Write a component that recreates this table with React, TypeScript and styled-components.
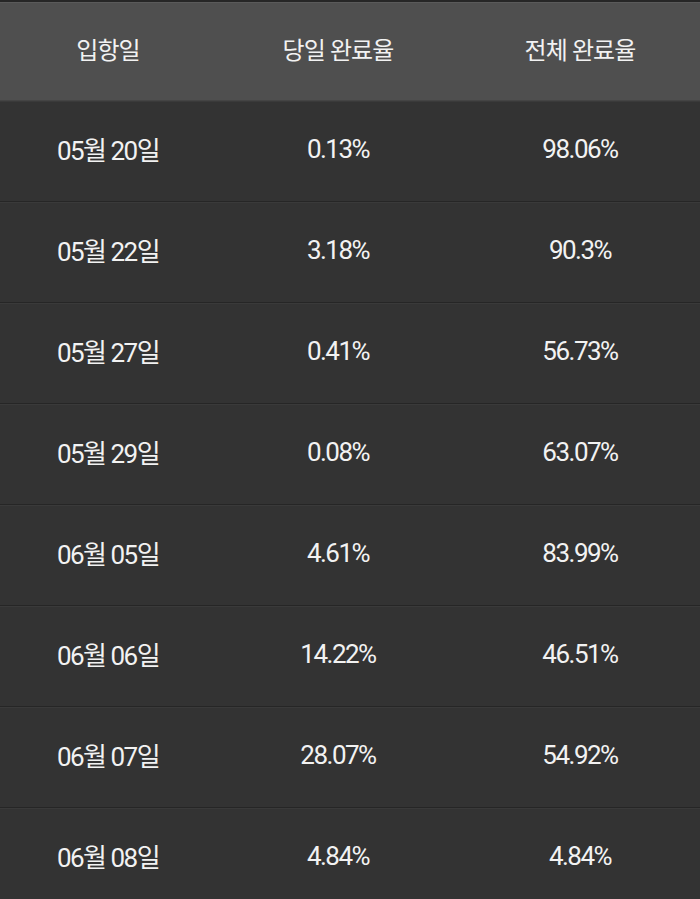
import React from "react";
import styled, { createGlobalStyle } from "styled-components";

const Global = createGlobalStyle`
  html, body { margin: 0; padding: 0; background: #333333; }
  body { font-family: Roboto, "Noto Sans CJK KR", sans-serif; }
`;

const Table = styled.div`
  width: 700px;
  border-top: 2px solid #262626;
`;

const Row = styled.div<{ $head?: boolean }>`
  display: grid;
  grid-template-columns: 216px 244px 240px;
  height: ${(p) => (p.$head ? "99px" : "101px")};
  padding-bottom: ${(p) => (p.$head ? "6px" : "6px")};
  background: ${(p) => (p.$head ? "#4f4f4f" : "#333333")};
  border-top: 1px solid ${(p) => (p.$head ? "#5a5a5a" : "#3a3a3a")};
  border-bottom: 1px solid ${(p) => (p.$head ? "#444444" : "#262626")};
  box-sizing: border-box;
`;

const Cell = styled.div<{ $head?: boolean }>`
  display: flex;
  align-items: center;
  justify-content: center;
  color: #f2f2f2;
  font-size: ${(p) => (p.$head ? "24px" : "26px")};
  letter-spacing: ${(p) => (p.$head ? "-0.9px" : "-1.5px")};
  font-family: Roboto, "Noto Sans CJK KR", sans-serif;
`;

const rows: [string, string, string][] = [
  ["05월 20일", "0.13%", "98.06%"],
  ["05월 22일", "3.18%", "90.3%"],
  ["05월 27일", "0.41%", "56.73%"],
  ["05월 29일", "0.08%", "63.07%"],
  ["06월 05일", "4.61%", "83.99%"],
  ["06월 06일", "14.22%", "46.51%"],
  ["06월 07일", "28.07%", "54.92%"],
  ["06월 08일", "4.84%", "4.84%"],
];

export default function App() {
  return (
    <>
      <Global />
      <Table>
        <Row $head>
          <Cell $head>입항일</Cell>
          <Cell $head>당일 완료율</Cell>
          <Cell $head>전체 완료율</Cell>
        </Row>
        {rows.map((r) => (
          <Row key={r[0]}>
            {r.map((c, i) => (
              <Cell key={i}>{c}</Cell>
            ))}
          </Row>
        ))}
      </Table>
    </>
  );
}
